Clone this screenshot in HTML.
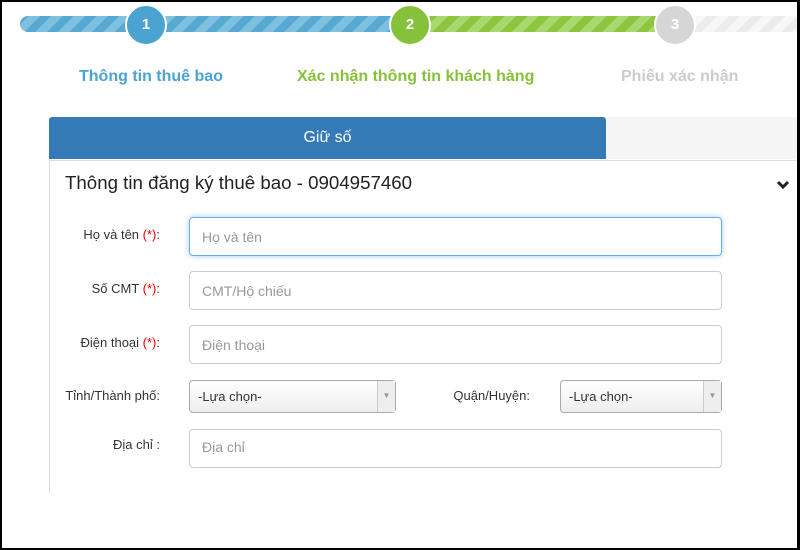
<!DOCTYPE html>
<html><head><meta charset="utf-8"><style>
*{box-sizing:border-box}
body{margin:0;width:800px;height:550px;overflow:hidden;background:#fff;font-family:"Liberation Sans",Arial,sans-serif;position:relative}
.frame{position:absolute;left:0;top:0;width:800px;height:550px;border:2px solid #000;border-right-width:3px;z-index:10;pointer-events:none}
.bar{position:absolute;top:16px;height:16px;border-radius:8px}
.circ{position:absolute;width:42px;height:42px;border-radius:50%;border:2px solid #fff;color:#fff;font-weight:bold;font-size:15px;text-align:center;line-height:38px;top:4px}
.lbl{position:absolute;top:68px;font-size:16px;font-weight:bold;white-space:nowrap}
.tab{position:absolute;left:49px;top:117px;width:557px;height:42px;background:#337ab7;color:#fff;text-align:center;line-height:42px;font-size:16px;border-radius:3px 3px 0 0}
.tab2{position:absolute;left:606px;top:117px;width:194px;height:42px;background:#f5f5f5}
.panel{position:absolute;left:49px;top:160px;width:760px;height:333px;border-left:1px solid #ddd;border-top:1px solid #ddd}
.title{position:absolute;left:65px;top:172px;font-size:18.7px;color:#222}
.fl{position:absolute;font-size:13px;color:#333;text-align:right;width:160px;left:0}
.fl span{color:#e00}
.in{position:absolute;left:189px;width:533px;height:39px;border:1px solid #ccc;border-radius:4px;font-size:14px;color:#999;padding:11px 12px}
.sel{position:absolute;height:33px;border:1px solid #aaa;border-radius:4px;background:linear-gradient(#fff,#eee);font-size:13px;color:#333;padding:8px 8px}
.sel i{position:absolute;right:0;top:0;width:18px;height:31px;border-left:1px solid #ccc;background:#eee;font-style:normal;font-size:8px;color:#999;text-align:center;line-height:29px}
</style></head><body>
<div class="bar" style="left:20px;width:400px;background:repeating-linear-gradient(-45deg,#57a9d2 0 8px,#7ec0e0 8px 16px)"></div>
<div class="bar" style="left:400px;width:270px;border-radius:0;background:repeating-linear-gradient(-45deg,#8cc63f 0 8px,#a9d86e 8px 16px)"></div>
<div class="bar" style="left:665px;width:150px;border-radius:0;background:repeating-linear-gradient(-45deg,#ececec 0 8px,#f7f7f7 8px 16px)"></div>
<div class="circ" style="left:125px;background:#4aa3d0">1</div>
<div class="circ" style="left:389px;background:#86c13b">2</div>
<div class="circ" style="left:654px;background:#d6d6d6">3</div>
<div class="lbl" style="left:79px;color:#4aa3d0">Thông tin thuê bao</div>
<div class="lbl" style="left:297px;color:#86c13b">Xác nhận thông tin khách hàng</div>
<div class="lbl" style="left:621px;color:#ccc">Phiếu xác nhận</div>
<div class="tab">Giữ số</div><div class="tab2"></div>
<div class="panel"></div>
<div class="title">Thông tin đăng ký thuê bao - 0904957460</div>
<svg style="position:absolute;left:776px;top:180px" width="14" height="10"><path d="M2 2 L7 7 L12 2" stroke="#222" stroke-width="3" fill="none"/></svg>
<div class="fl" style="top:227px">Họ và tên <span>(*)</span>:</div>
<div class="in" style="top:217px;border-color:#66afe9;box-shadow:0 0 6px rgba(102,175,233,.6)">Họ và tên</div>
<div class="fl" style="top:281px">Số CMT <span>(*)</span>:</div>
<div class="in" style="top:271px">CMT/Hộ chiếu</div>
<div class="fl" style="top:335px">Điện thoại <span>(*)</span>:</div>
<div class="in" style="top:325px">Điện thoại</div>
<div class="fl" style="top:388px">Tỉnh/Thành phố:</div>
<div class="sel" style="left:189px;top:380px;width:207px">-Lựa chọn-<i>▼</i></div>
<div class="fl" style="top:388px;left:370px">Quận/Huyện:</div>
<div class="sel" style="left:560px;top:380px;width:162px">-Lựa chọn-<i>▼</i></div>
<div class="fl" style="top:437px">Địa chỉ :</div>
<div class="in" style="top:429px;height:39px;padding-top:9px">Địa chỉ</div>
<div class="frame"></div>
</body></html>
